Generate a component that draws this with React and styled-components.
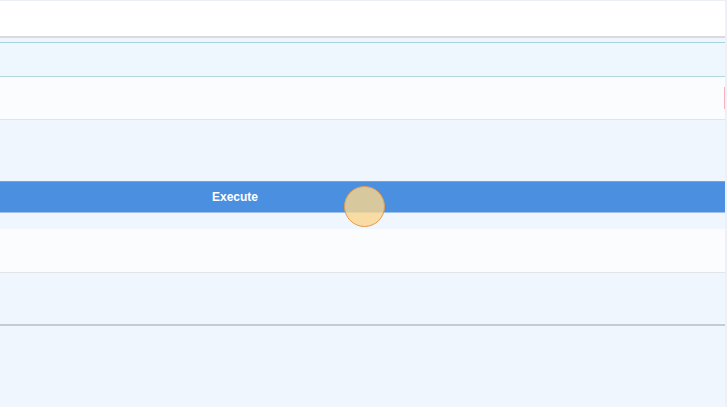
import React from "react";
import styled, { createGlobalStyle } from "styled-components";

const GlobalStyle = createGlobalStyle`
  html, body {
    margin: 0;
    padding: 0;
    background: #eff6fd;
    font-family: "Liberation Sans", Arial, sans-serif;
  }
`;

const Page = styled.div`
  display: flex;
  width: 727px;
  height: 407px;
  overflow: hidden;
  background: #eff6fd;
`;

const Main = styled.div`
  display: flex;
  flex-direction: column;
  width: 725px;
`;

const Edge = styled.div`
  width: 2px;
  background: #eeeff8;
`;

const Header = styled.div`
  height: 35px;
  background: #ffffff;
  border-top: 1px solid #eceef5;
  border-bottom: 2px solid #d9dadc;
  margin-bottom: 4px;
`;

const Info = styled.div`
  height: 33px;
  background: #eef7fe;
  border-top: 1px solid #a9d3dd;
  border-bottom: 1px solid #b3d6df;
`;

const Row = styled.div`
  position: relative;
  height: ${({ $h }) => $h}px;
  background: #fbfcfe;
  border-bottom: 1px solid #e1e5ea;
  margin-top: ${({ $top }) => $top || 0}px;
`;

const Flag = styled.span`
  position: absolute;
  right: 0;
  top: 10px;
  width: 1px;
  height: 22px;
  background: #f2b6b8;
`;

const Button = styled.button`
  display: flex;
  align-items: center;
  justify-content: center;
  height: 32px;
  margin-top: 61px;
  padding: 0 255px 0 0;
  border: none;
  border-top: 1px solid #6aa4e6;
  border-bottom: 1px solid #9fc1e8;
  background: #4a8fe0;
  color: #ffffff;
  font-family: "Liberation Sans", Arial, sans-serif;
  font-size: 12px;
  font-weight: 700;
  cursor: pointer;
  position: relative;
`;

const Cursor = styled.span`
  position: absolute;
  left: 344px;
  top: 4px;
  width: 41px;
  height: 41px;
  border-radius: 50%;
  background: rgba(250, 214, 140, 0.8);
  border: 1.5px solid #e79a4a;
  box-sizing: border-box;
  pointer-events: none;
`;

const Divider = styled.div`
  height: 51px;
  border-bottom: 2px solid #c6cbd1;
`;

export default function App() {
  return (
    <>
      <GlobalStyle />
      <Page>
        <Main>
          <Header />
          <Info />
          <Row $h={42}>
            <Flag />
          </Row>
          <Button>
            Execute
            <Cursor />
          </Button>
          <Row $h={43} $top={16} />
          <Divider />
        </Main>
        <Edge />
      </Page>
    </>
  );
}
